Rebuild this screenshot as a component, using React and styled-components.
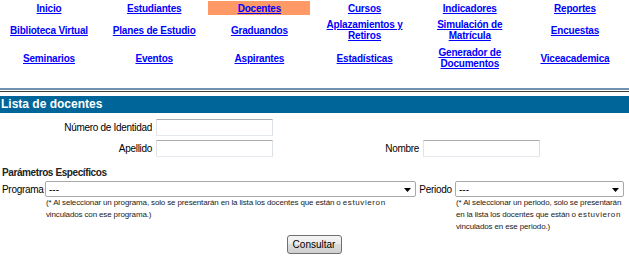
import React from 'react';
import styled, { createGlobalStyle } from 'styled-components';

const GlobalStyle = createGlobalStyle`
  html, body { margin: 0; padding: 0; background: #fff; }
  body {
    font-family: "Liberation Sans", Arial, sans-serif;
    font-size: 10px;
    color: #000;
  }
`;

const Page = styled.div`
  width: 629px;
  overflow: hidden;
`;

const Menu = styled.nav`
  display: grid;
  grid-template-columns: repeat(6, 102px);
  grid-template-rows: 14px 26px 26px;
  column-gap: 3.2px;
  row-gap: 2px;
  margin: 1px 0 17px -2px;
`;

const MenuCell = styled.div`
  display: flex;
  align-items: center;
  justify-content: center;
  text-align: center;
  background: ${(p) => (p.$active ? '#ff9966' : 'transparent')};
`;

const MenuLink = styled.a`
  font-weight: bold;
  font-size: 10px;
  letter-spacing: -0.2px;
  line-height: 11px;
  color: #0000ff;
  text-decoration: underline;
  cursor: pointer;
`;

const Rule = styled.div`
  height: 1px;
  border-top: 2px solid #6f92b2;
  border-bottom: 1px solid #3c3c3c;
  margin-bottom: 4px;
`;

const TitleBar = styled.h1`
  margin: 0;
  height: 17px;
  background: #006699;
  color: #fff;
  font-size: 12px;
  font-weight: bold;
  line-height: 17px;
  padding-left: 1px;
`;

const Fields = styled.div`
  display: grid;
  grid-template-columns: 152px 117px 142px 117px;
  grid-auto-rows: 17px;
  column-gap: 4px;
  row-gap: 4px;
  margin-top: 6px;
`;

const Label = styled.label`
  align-self: center;
  text-align: right;
  font-size: 10px;
  letter-spacing: -0.3px;
  white-space: nowrap;
`;

const TextInput = styled.input`
  box-sizing: border-box;
  width: 100%;
  height: 17px;
  margin: 0;
  padding: 0 3px;
  border: 1px solid;
  border-color: #abadb3 #dbdfe6 #e3e9ef #e2e3ea;
  border-radius: 1px;
  background: #fff;
  font: 10px "Liberation Sans", Arial, sans-serif;
`;

const SubHeading = styled.h2`
  margin: 10px 0 2px 2px;
  font-size: 10px;
  font-weight: bold;
  letter-spacing: -0.4px;
  line-height: 12px;
  color: #222;
`;

const Filters = styled.div`
  display: grid;
  grid-template-columns: 43px 371px 39px 169px;
  grid-template-rows: 16px auto;
  margin-left: 2px;
`;

const FilterLabel = styled.label`
  align-self: center;
  justify-self: ${(p) => (p.$center ? 'center' : 'start')};
  font-size: 10px;
  letter-spacing: -0.3px;
  white-space: nowrap;
`;

const SelectWrap = styled.div`
  position: relative;
  height: 16px;
`;

const Select = styled.select`
  appearance: none;
  -webkit-appearance: none;
  box-sizing: border-box;
  width: 100%;
  height: 16px;
  margin: 0;
  padding: 0 0 0 3px;
  border: 1px solid #a9a9a9;
  border-radius: 2px;
  background: #fff;
  color: #000;
  font: 10px "Liberation Sans", Arial, sans-serif;
  outline: none;
`;

const Arrow = styled.svg`
  position: absolute;
  right: 5px;
  top: 7px;
  width: 7px;
  height: 4px;
  pointer-events: none;
`;

const Note = styled.p`
  margin: 0;
  grid-column: ${(p) => p.$col};
  font-size: 8px;
  letter-spacing: -0.14px;
  line-height: 12px;
  color: #222;
  white-space: nowrap;
  padding-left: 1px;
`;

const Spaced = styled.span`
  letter-spacing: 0.6px;
`;

const Actions = styled.div`
  display: flex;
  justify-content: center;
  margin-top: 2px;
  padding-right: 1px;
`;

const Button = styled.button`
  box-sizing: border-box;
  width: 55px;
  height: 19px;
  padding: 0;
  border: 1px solid #707070;
  border-radius: 3px;
  background: linear-gradient(#f4f4f4, #ebebeb 50%, #dddddd 50%, #cfcfcf);
  color: #000;
  font: 10px "Liberation Sans", Arial, sans-serif;
`;

const menu = [
  ['Inicio'],
  ['Estudiantes'],
  ['Docentes', true],
  ['Cursos'],
  ['Indicadores'],
  ['Reportes'],
  ['Biblioteca Virtual'],
  ['Planes de Estudio'],
  ['Graduandos'],
  ['Aplazamientos y|Retiros'],
  ['Simulación de|Matrícula'],
  ['Encuestas'],
  ['Seminarios'],
  ['Eventos'],
  ['Aspirantes'],
  ['Estadísticas'],
  ['Generador de|Documentos'],
  ['Viceacademica'],
];

const DropArrow = () => (
  <Arrow viewBox="0 0 7 4">
    <polygon points="0,0 7,0 3.5,4" fill="#000" />
  </Arrow>
);

export default function App() {
  return (
    <Page>
      <GlobalStyle />
      <Menu>
        {menu.map(([label, active]) => {
          const parts = label.split('|');
          return (
            <MenuCell key={label} $active={active}>
              <MenuLink>
                {parts.map((part, i) => (
                  <React.Fragment key={i}>
                    {i > 0 && <br />}
                    {part}
                  </React.Fragment>
                ))}
              </MenuLink>
            </MenuCell>
          );
        })}
      </Menu>
      <Rule />
      <TitleBar>Lista de docentes</TitleBar>
      <Fields>
        <Label>Número de Identidad</Label>
        <TextInput type="text" />
        <span />
        <span />
        <Label>Apellido</Label>
        <TextInput type="text" />
        <Label>Nombre</Label>
        <TextInput type="text" />
      </Fields>
      <SubHeading>Parámetros Específicos</SubHeading>
      <Filters>
        <FilterLabel>Programa</FilterLabel>
        <SelectWrap>
          <Select defaultValue="">
            <option value="">---</option>
          </Select>
          <DropArrow />
        </SelectWrap>
        <FilterLabel $center>Periodo</FilterLabel>
        <SelectWrap>
          <Select defaultValue="">
            <option value="">---</option>
          </Select>
          <DropArrow />
        </SelectWrap>
        <Note $col="2">
          (* Al seleccionar un programa, solo se presentarán en la lista los docentes que están o <Spaced>estuvieron</Spaced>
          <br />
          vinculados con ese programa.)
        </Note>
        <Note $col="4">
          (* Al seleccionar un periodo, solo se presentarán
          <br />
          en la lista los docentes que están o <Spaced>estuvieron</Spaced>
          <br />
          vinculados en ese periodo.)
        </Note>
      </Filters>
      <Actions>
        <Button type="button">Consultar</Button>
      </Actions>
    </Page>
  );
}
